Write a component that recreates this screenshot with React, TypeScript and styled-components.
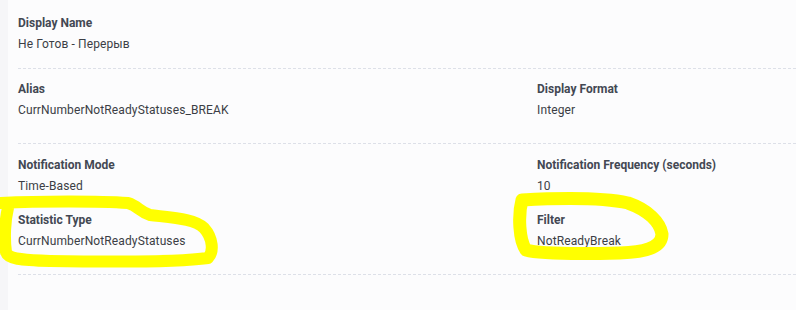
import React from "react";
import styled, { createGlobalStyle } from "styled-components";

const Global = createGlobalStyle`
  html, body { margin: 0; padding: 0; }
  body {
    background: #f6f6f8;
    font-family: Roboto, "Noto Sans", Arial, sans-serif;
    width: 796px;
    height: 310px;
    overflow: hidden;
  }
`;

const Page = styled.div`
  position: relative;
  height: 310px;
  padding-left: 8px;
`;

const Panel = styled.div`
  background: #fcfcfd;
  height: 310px;
  padding-left: 10px;
`;

const Section = styled.section<{ $top: number; $bottom: number }>`
  display: grid;
  grid-template-columns: 519px 1fr;
  row-gap: 20px;
  padding: ${(p) => p.$top}px 0 ${(p) => p.$bottom}px;
  border-bottom: 1px dashed #dde0e8;
`;

const Field = styled.div`
  display: flex;
  flex-direction: column;
  gap: 7px;
`;

const Label = styled.div`
  font-size: 12px;
  line-height: 14px;
  font-weight: 700;
  color: #434853;
`;

const Value = styled.div`
  font-size: 12px;
  line-height: 14px;
  letter-spacing: 0.12px;
  color: #3b3e45;
`;

const Marker = styled.svg`
  position: absolute;
  left: 0;
  top: 0;
  pointer-events: none;
`;

const F = ({ label, value }: { label: string; value: string }) => (
  <Field>
    <Label>{label}</Label>
    <Value>{value}</Value>
  </Field>
);

export default function App() {
  return (
    <Page>
      <Global />
      <Panel>
        <Section $top={16} $bottom={17}>
          <F label="Display Name" value="Не Готов - Перерыв" />
        </Section>
        <Section $top={13} $bottom={26}>
          <F label="Alias" value="CurrNumberNotReadyStatuses_BREAK" />
          <F label="Display Format" value="Integer" />
        </Section>
        <Section $top={14} $bottom={26}>
          <F label="Notification Mode" value="Time-Based" />
          <F label="Notification Frequency (seconds)" value="10" />
          <F label="Statistic Type" value="CurrNumberNotReadyStatuses" />
          <F label="Filter" value="NotReadyBreak" />
        </Section>
      </Panel>
      <Marker width="796" height="310" viewBox="0 0 796 310">
        <path
          d="M1 203 C40 201 100 201 128 203 C138 206 140 212 150 215 C175 218 195 219 204 228 C213 238 214 252 208 258 C180 262 110 262 50 261 C20 260 8 259 6 252 C4 238 5 220 8 208"
          fill="none"
          stroke="#ffff00"
          strokeWidth="12"
          strokeLinecap="round"
          strokeLinejoin="round"
        />
        <path
          d="M522 200 C560 198 605 198 628 203 C648 210 660 222 662 234 C662 246 650 252 620 253 C580 254 540 254 526 250 C519 240 518 215 522 200"
          fill="none"
          stroke="#ffff00"
          strokeWidth="13"
          strokeLinecap="round"
          strokeLinejoin="round"
        />
      </Marker>
    </Page>
  );
}
